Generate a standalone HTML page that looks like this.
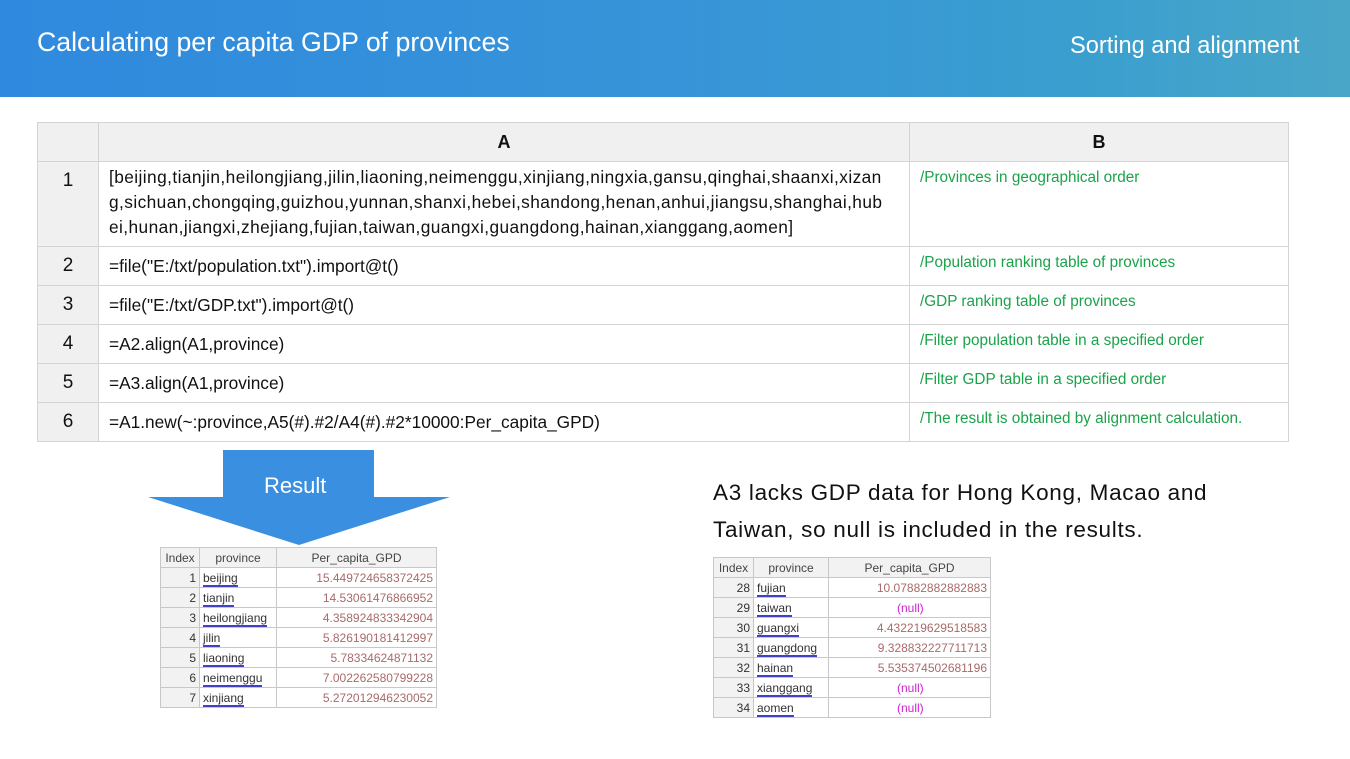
<!DOCTYPE html>
<html><head><meta charset="utf-8"><style>
*{margin:0;padding:0;box-sizing:border-box}
body{width:1350px;height:759px;background:#fff;position:relative;overflow:hidden;font-family:"Liberation Sans",sans-serif}
.hdr{position:absolute;left:0;top:0;width:1350px;height:97px;background:linear-gradient(90deg,#2f89de 0%,#3794d8 50%,#3a9fcf 80%,#4aa6c8 100%)}
.hdr .t{position:absolute;left:37px;top:27px;color:#fff;font-size:26.7px}
.hdr .s{position:absolute;left:1070px;top:33px;color:#fff;font-size:23.6px}
table{border-collapse:collapse;position:absolute;table-layout:fixed}
.m{left:37px;top:122px;width:1251px}
.m td{border:1px solid #d4d4d4;font-size:17.3px;color:#111;vertical-align:top;overflow:hidden}
.m tr.h td{background:#f0f0f0;text-align:center;font-weight:bold;font-size:18px;vertical-align:middle;height:39px}
.m td.n{background:#f0f0f0;text-align:center;font-size:19px;vertical-align:middle}
.m td.a{padding:0 10px;vertical-align:middle;line-height:25px;white-space:nowrap}
.m td.b{color:#1aa34a;font-size:15.3px;padding:7px 10px 0 10px;white-space:nowrap}
.m tr.r td{height:39px}
.sm td{border:1px solid #c8c8c8;font-size:12px;height:20px;padding:0 3px;color:#333;white-space:nowrap;overflow:hidden}
.sm tr:first-child td{background:#f2f2f2;text-align:center;color:#444}
.sm td.i{text-align:right;background:#f2f2f2}
.sm td.p a{color:#333;text-decoration:none;border-bottom:2px solid #4040c8}
.sm td.v{text-align:right;color:#a86a6a}
.sm td.nl{color:#d020d0;text-align:left;padding-left:68px}
</style></head><body>
<div class="hdr"><div class="t">Calculating per capita GDP of provinces</div><div class="s">Sorting and alignment</div></div>
<table class="m">
<colgroup><col style="width:61px"><col style="width:811px"><col style="width:379px"></colgroup>
<tr class="h"><td class="n"></td><td>A</td><td>B</td></tr>
<tr><td class="n" style="height:85px;vertical-align:top;padding-top:8px">1</td><td class="a" style="padding-top:3px;vertical-align:top;letter-spacing:0.42px">[beijing,tianjin,heilongjiang,jilin,liaoning,neimenggu,xinjiang,ningxia,gansu,qinghai,shaanxi,xizan<br>g,sichuan,chongqing,guizhou,yunnan,shanxi,hebei,shandong,henan,anhui,jiangsu,shanghai,hub<br>ei,hunan,jiangxi,zhejiang,fujian,taiwan,guangxi,guangdong,hainan,xianggang,aomen]</td><td class="b">/Provinces in geographical order</td></tr>
<tr class="r"><td class="n">2</td><td class="a">=file("E:/txt/population.txt").import@t()</td><td class="b">/Population ranking table of provinces</td></tr>
<tr class="r"><td class="n">3</td><td class="a">=file("E:/txt/GDP.txt").import@t()</td><td class="b">/GDP ranking table of provinces</td></tr>
<tr class="r"><td class="n">4</td><td class="a">=A2.align(A1,province)</td><td class="b">/Filter population table in a specified order</td></tr>
<tr class="r"><td class="n">5</td><td class="a">=A3.align(A1,province)</td><td class="b">/Filter GDP table in a specified order</td></tr>
<tr class="r"><td class="n">6</td><td class="a">=A1.new(~:province,A5(#).#2/A4(#).#2*10000:Per_capita_GPD)</td><td class="b">/The result is obtained by alignment calculation.</td></tr>
</table>
<svg style="position:absolute;left:0;top:0" width="1350" height="759"><polygon points="223,450 374,450 374,497 450,497 299,545 148,497 223,497" fill="#3b8fe0"/></svg>
<div style="position:absolute;left:264px;top:473px;color:#fff;font-size:22px">Result</div>
<div style="position:absolute;left:713px;top:474px;font-size:22.5px;line-height:37px;color:#111;letter-spacing:0.7px;white-space:nowrap">A3 lacks GDP data for Hong Kong, Macao and<br>Taiwan, so null is included in the results.</div>
<table class="sm" style="left:160px;top:547px;width:277px">
<colgroup><col style="width:39px"><col style="width:77px"><col></colgroup>
<tr><td>Index</td><td>province</td><td>Per_capita_GPD</td></tr>
<tr><td class="i">1</td><td class="p"><a>beijing</a></td><td class="v">15.449724658372425</td></tr>
<tr><td class="i">2</td><td class="p"><a>tianjin</a></td><td class="v">14.53061476866952</td></tr>
<tr><td class="i">3</td><td class="p"><a>heilongjiang</a></td><td class="v">4.358924833342904</td></tr>
<tr><td class="i">4</td><td class="p"><a>jilin</a></td><td class="v">5.826190181412997</td></tr>
<tr><td class="i">5</td><td class="p"><a>liaoning</a></td><td class="v">5.78334624871132</td></tr>
<tr><td class="i">6</td><td class="p"><a>neimenggu</a></td><td class="v">7.002262580799228</td></tr>
<tr><td class="i">7</td><td class="p"><a>xinjiang</a></td><td class="v">5.272012946230052</td></tr>
</table>
<table class="sm" style="left:713px;top:557px;width:278px">
<colgroup><col style="width:40px"><col style="width:75px"><col></colgroup>
<tr><td>Index</td><td>province</td><td>Per_capita_GPD</td></tr>
<tr><td class="i">28</td><td class="p"><a>fujian</a></td><td class="v">10.07882882882883</td></tr>
<tr><td class="i">29</td><td class="p"><a>taiwan</a></td><td class="nl">(null)</td></tr>
<tr><td class="i">30</td><td class="p"><a>guangxi</a></td><td class="v">4.432219629518583</td></tr>
<tr><td class="i">31</td><td class="p"><a>guangdong</a></td><td class="v">9.328832227711713</td></tr>
<tr><td class="i">32</td><td class="p"><a>hainan</a></td><td class="v">5.535374502681196</td></tr>
<tr><td class="i">33</td><td class="p"><a>xianggang</a></td><td class="nl">(null)</td></tr>
<tr><td class="i">34</td><td class="p"><a>aomen</a></td><td class="nl">(null)</td></tr>
</table>
</body></html>
